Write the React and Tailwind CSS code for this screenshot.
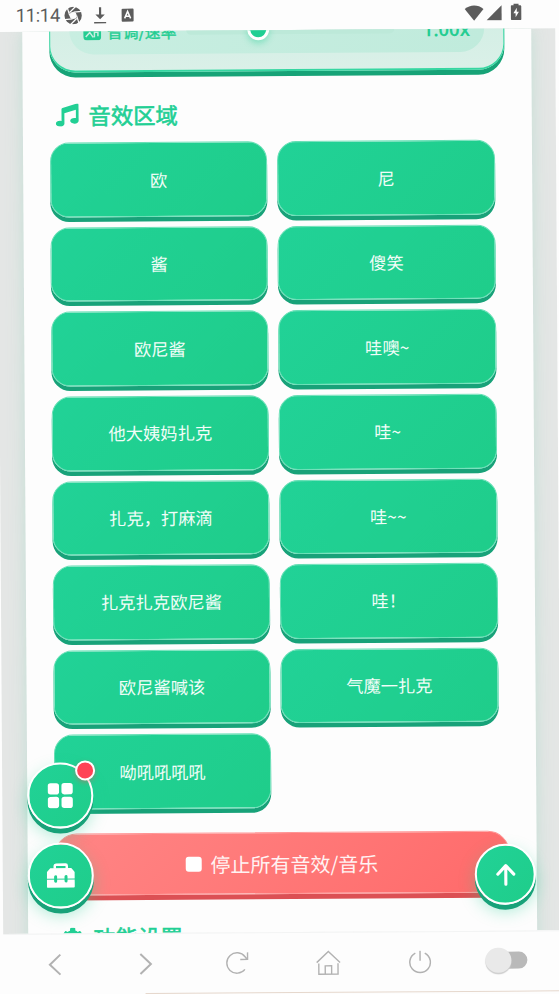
import React from "react";
import { FaMusic, FaCog } from "react-icons/fa";

const SOUNDS = [
  "欧", "尼",
  "酱", "傻笑",
  "欧尼酱", "哇噢~",
  "他大姨妈扎克", "哇~",
  "扎克，打麻滴", "哇~~",
  "扎克扎克欧尼酱", "哇！",
  "欧尼酱喊该", "气魔一扎克",
  "呦吼吼吼吼",
];

function StatusBar() {
  return (
    <header className="flex h-[31.8px] shrink-0 items-center bg-[#fdfdfd] pl-[18.5px] pr-[33px] text-[#5c5c5c]">
      <span className="font-['Roboto',sans-serif] text-[18.5px] leading-none tracking-[-0.35px]">11:14</span>
      <svg className="ml-[4px] mt-px" width="18" height="18" viewBox="0 0 18 18">
        <circle cx="9" cy="9" r="6.1" fill="none" stroke="currentColor" strokeWidth="5.2" />
        <g stroke="#fdfdfd" strokeWidth="1.2">
          <path d="M3.2 1 5.6 9M11.5 0 5.5 6M17.5 5 9.5 5.6M14.8 16.5 12.4 9M6.5 18l6-6M.5 13l8-.6" />
        </g>
      </svg>
      <svg className="ml-[11.5px] mt-px" width="14" height="18" viewBox="0 0 14 18" fill="currentColor">
        <path d="M5.9 1h2.2v7.2h3.6L7 13 2.3 8.2h3.6zM1 15.6h12V17H1z" />
      </svg>
      <svg className="ml-[14px] mt-px" width="13" height="14" viewBox="0 0 13 14">
        <rect x=".5" y=".5" width="12" height="13" rx="1" fill="currentColor" />
        <path d="M3.5 10.2 6.5 3.2l3 7M4.6 8h3.8" fill="none" stroke="#fdfdfd" strokeWidth="1.5" />
      </svg>
      <div className="ml-auto mt-px flex items-center">
        <svg width="20" height="16" viewBox="0 0 20 16" fill="currentColor">
          <path d="M.6 4.2C6-.4 14-.4 19.4 4.2L10 15.8z" />
        </svg>
        <svg className="ml-[2px]" width="16" height="16" viewBox="0 0 16 16" fill="currentColor">
          <path d="M15.5.5v15H.5z" />
        </svg>
        <svg className="mb-[1px] ml-[8px]" width="12" height="17" viewBox="0 0 12 17">
          <path d="M3.5 0h5v1.6h1.7c.6 0 1 .4 1 1v12.8c0 .6-.4 1-1 1H1.8c-.6 0-1-.4-1-1V2.6c0-.6.4-1 1-1h1.7z" fill="currentColor" />
          <path d="M6.7 4.3 3.3 9.6h2.2v4.1l3.3-5.4H6.7z" fill="#fdfdfd" />
        </svg>
      </div>
    </header>
  );
}

function RateCard() {
  return (
    <section className="-mt-20 flex h-[121px] shrink-0 flex-col rounded-[26px] border border-b-2 border-[#36d6a1] bg-linear-to-b from-[#c9ede0] to-[#daf0e8] p-[19px] pb-[15.5px] shadow-[0_5px_0_#17a377]">
      <div className="flex flex-1 items-end rounded-[24px] bg-linear-to-r from-[#c8eee1] to-[#c0ebdc] px-[14px] pb-[14.5px] text-[#24cd92]">
        <svg width="18" height="17" viewBox="0 0 18 17">
          <rect width="18" height="17" rx="4" fill="currentColor" />
          <path d="M2.5 13.5 6.5 9l3.5 5M11.2 8v6M11.2 9h3.5v4" fill="none" stroke="#c8eee1" strokeWidth="1.5" />
        </svg>
        <span className="ml-[6px] text-[15.8px] font-normal leading-[17px] [-webkit-text-stroke:0.4px]">音调/速率</span>
        <div className="ml-[10px] mb-[5px] flex h-[9px] w-[208px] items-center rounded-full bg-[#bde9d9]">
          <div className="ml-[61px] size-[22px] shrink-0 rounded-full border-[3px] border-white bg-[#20cf93] shadow-[0_3px_6px_rgba(32,207,147,.4)]" />
        </div>
        <span className="ml-auto font-['Noto_Sans',sans-serif] text-[18.5px] font-semibold leading-[18px]">1.00x</span>
      </div>
    </section>
  );
}

function SoundButton({ label }) {
  return (
    <button className="flex h-[74.6px] items-center justify-center rounded-[19px] border border-[#66dfb5] bg-linear-135 from-[#21d297] to-[#1fcd8a] text-[17.3px] text-[#f1fdf8] shadow-[0_4.5px_0_#18a279]">
      {label}
    </button>
  );
}

function NavBar() {
  return (
    <nav className="grid h-[60.5px] shrink-0 grid-cols-6 place-items-center border-t border-[#f3f4f4] bg-[#fdfdfd] pl-[6px] pr-[5px] text-[#b2b2b2]">
      <svg width="24" height="24" viewBox="0 0 24 24" fill="none" stroke="currentColor" strokeWidth="2">
        <path d="M17 2 6.5 12 17 22" />
      </svg>
      <svg width="24" height="24" viewBox="0 0 24 24" fill="none" stroke="currentColor" strokeWidth="2">
        <path d="M6 2l10.5 10L6 22" />
      </svg>
      <svg width="24" height="24" viewBox="0 0 24 24" fill="none" stroke="currentColor" strokeWidth="1.4">
        <path d="M19.5 18A10.2 10.2 0 1 1 19.7 5.3l2 2.6M22.2 1v7h-7.3" />
      </svg>
      <svg width="26" height="26" viewBox="0 0 26 26" fill="none" stroke="currentColor" strokeWidth="1.4">
        <path d="M1.3 12.7 13 1.7l11.7 11M3.4 13.5V24.3H22.6V13.5M9.8 24V16h6.4v8" />
      </svg>
      <svg width="24" height="24" viewBox="0 0 24 24" fill="none" stroke="currentColor" strokeWidth="1.5">
        <path d="M8 2.9a10.3 10.3 0 1 0 9.4 0M12.7.5v10" />
      </svg>
      <div className="-ml-[10px] -mt-[2px] flex h-[17.5px] w-[41px] items-center rounded-full">
        <div className="z-10 size-[25.5px] shrink-0 rounded-full bg-[#e9e9e9] shadow-[0_1.5px_1px_#cdcdcd]" />
        <div className="-ml-[10px] h-[17.5px] w-[26px] shrink-0 rounded-r-full bg-[#b9b9b9]" />
      </div>
    </nav>
  );
}

const fab =
  "absolute flex items-center justify-center rounded-full border-[2.5px] border-white bg-linear-135 from-[#21d297] to-[#1fcd8a] text-white shadow-[0_5px_0_#18a279,0_7px_16px_rgba(32,207,147,.35)]";

const heading =
  "flex h-[24px] shrink-0 items-center text-[22.3px] font-normal leading-none text-[#22cf94]";

export default function App() {
  return (
    <div className="h-[994px] w-[559px] overflow-hidden bg-[#fdfdfd] font-['Noto_Sans_CJK_SC',sans-serif]">
      <div className="relative -ml-[3px] flex w-[558.3px] origin-[3px_0] -rotate-[0.38deg] flex-col">
        <StatusBar />
        <main className="h-[902px] shrink-0 overflow-hidden bg-[#e4e6e5] pl-[24.8px]">
          <div className="h-[1000px] w-[509px] bg-[#fdfdfd] px-[27px] shadow-[0_0_16px_rgba(180,220,205,.7)]">
            <div className="flex h-full flex-col">
              <RateCard />
              <h2 className={`${heading} mt-[30.7px] [-webkit-text-stroke:0.6px]`}>
                <FaMusic className="ml-[6px] mr-[10px] size-[23px]" />
                音效区域
              </h2>
              <div className="mt-[15.7px] grid shrink-0 grid-cols-2 gap-[10px] pr-[10.3px]">
                {SOUNDS.map((s) => (
                  <SoundButton key={s} label={s} />
                ))}
              </div>
              <button className="mt-[24.3px] flex h-[61.7px] shrink-0 items-center justify-center rounded-[22px] border border-[#ff9494] bg-linear-135 from-[#ff8585] to-[#ff6a6a] pt-px text-[20px] text-[#fff3f3] shadow-[0_5px_0_#dc5054]">
                <span className="mr-[9px] size-[15.5px] rounded-[3px] bg-white" />
                停止所有音效/音乐
              </button>
              <h2 className={`${heading} mt-[29px] [-webkit-text-stroke:0.6px]`}>
                <FaCog className="ml-[7.5px] mr-[10px] mt-[3px] size-[21px]" />
                功能设置
              </h2>
            </div>
          </div>
        </main>
        <NavBar />
        <div className="ml-[142px] h-px bg-[#e6d8cd]" />

        <button className={`${fab} left-[25.3px] top-[763px] size-[66px]`}>
          <svg width="26" height="26" viewBox="0 0 26 26" fill="currentColor">
            <rect x=".5" y=".5" width="11.3" height="11.3" rx="2.8" />
            <rect x="14.2" y=".5" width="11.3" height="11.3" rx="2.8" />
            <rect x=".5" y="14.2" width="11.3" height="11.3" rx="2.8" />
            <rect x="14.2" y="14.2" width="11.3" height="11.3" rx="2.8" />
          </svg>
        </button>
        <span className="absolute left-[73.2px] top-[761.3px] size-[20px] rounded-full border-[2.5px] border-white bg-[#ff4357] shadow-[0_2px_5px_rgba(255,71,87,.4)]" />
        <button className={`${fab} left-[25.3px] top-[842.5px] size-[66px]`}>
          <svg className="-ml-px" width="28" height="26" viewBox="0 0 28 26">
            <path d="M8 6V3.2Q8 2 9.2 2h9.6Q20 2 20 3.2V6" fill="none" stroke="currentColor" strokeWidth="2.5" />
            <path d="M3.5 5.5h21L28 9.5V16H0V9.5zM0 17h28v7q0 1-1 1H1q-1 0-1-1z" fill="currentColor" />
            <path d="M8.8 14v4.5M19.2 14v4.5" stroke="#20cf91" strokeWidth="3" strokeLinecap="round" />
          </svg>
        </button>
        <button className={`${fab} left-[472.4px] top-[847.2px] size-[61px]`}>
          <svg width="22" height="24" viewBox="0 0 22 24" fill="none" stroke="currentColor" strokeWidth="3.1" strokeLinecap="round" strokeLinejoin="round">
            <path d="M3 11.5 11 3l8 8.5M11 3.5v18" />
          </svg>
        </button>
      </div>
    </div>
  );
}
